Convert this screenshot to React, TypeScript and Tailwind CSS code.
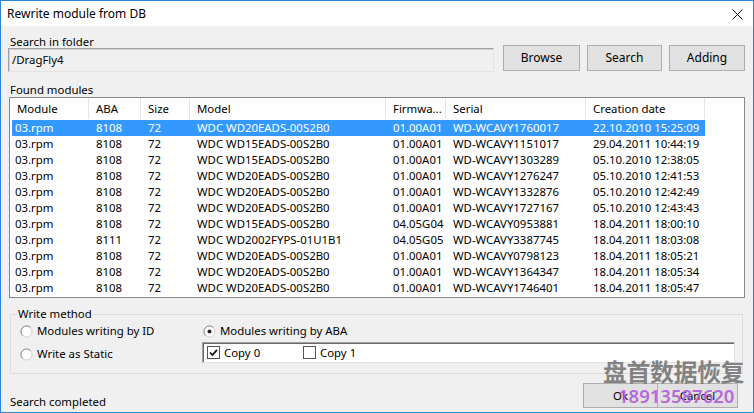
import React from 'react';

type Row = [string, string, string, string, string, string, string];

const rows: Row[] = [
  ['03.rpm', '8108', '72', 'WDC WD20EADS-00S2B0', '01.00A01', 'WD-WCAVY1760017', '22.10.2010 15:25:09'],
  ['03.rpm', '8108', '72', 'WDC WD15EADS-00S2B0', '01.00A01', 'WD-WCAVY1151017', '29.04.2011 10:44:19'],
  ['03.rpm', '8108', '72', 'WDC WD15EADS-00S2B0', '01.00A01', 'WD-WCAVY1303289', '05.10.2010 12:38:05'],
  ['03.rpm', '8108', '72', 'WDC WD20EADS-00S2B0', '01.00A01', 'WD-WCAVY1276247', '05.10.2010 12:41:53'],
  ['03.rpm', '8108', '72', 'WDC WD20EADS-00S2B0', '01.00A01', 'WD-WCAVY1332876', '05.10.2010 12:42:49'],
  ['03.rpm', '8108', '72', 'WDC WD20EADS-00S2B0', '01.00A01', 'WD-WCAVY1727167', '05.10.2010 12:43:43'],
  ['03.rpm', '8108', '72', 'WDC WD15EADS-00S2B0', '04.05G04', 'WD-WCAVY0953881', '18.04.2011 18:00:10'],
  ['03.rpm', '8111', '72', 'WDC WD2002FYPS-01U1B1', '04.05G05', 'WD-WCAVY3387745', '18.04.2011 18:03:08'],
  ['03.rpm', '8108', '72', 'WDC WD20EADS-00S2B0', '01.00A01', 'WD-WCAVY0798123', '18.04.2011 18:05:21'],
  ['03.rpm', '8108', '72', 'WDC WD20EADS-00S2B0', '01.00A01', 'WD-WCAVY1364347', '18.04.2011 18:05:34'],
  ['03.rpm', '8108', '72', 'WDC WD20EADS-00S2B0', '01.00A01', 'WD-WCAVY1746401', '18.04.2011 18:05:47'],
];

const columns = ['Module', 'ABA', 'Size', 'Model', 'Firmwa...', 'Serial', 'Creation date'];

// column widths, px — header and rows share the same template
const gridCols = 'grid grid-cols-[79px_52px_49px_196px_60px_140px_119px_1fr]';

function WinButton({ children, className = '' }: { children: React.ReactNode; className?: string }) {
  return (
    <button
      type="button"
      className={`flex items-center justify-center border border-[#adadad] bg-[#e1e1e1] leading-none text-black ${className}`}
    >
      {children}
    </button>
  );
}

function Radio({ checked }: { checked?: boolean }) {
  return (
    <svg width="13" height="13" viewBox="0 0 13 13" className="shrink-0">
      <circle cx="6.5" cy="6.5" r="5.5" fill="#fff" stroke="#d0d0d0" />
      <path d="M2.6 10.4 A5.5 5.5 0 0 1 10.4 2.6" fill="none" stroke="#8a8a8a" />
      {checked ? <circle cx="6.5" cy="6.5" r="2" fill="#222" /> : null}
    </svg>
  );
}

function Checkbox({ checked }: { checked?: boolean }) {
  return (
    <svg width="13" height="13" viewBox="0 0 13 13" className="shrink-0">
      <rect x="0.5" y="0.5" width="12" height="12" fill="#fff" stroke="#555" />
      {checked ? <path d="M3 6.5 L5.4 9 L10 3.8" fill="none" stroke="#111" strokeWidth="1.8" /> : null}
    </svg>
  );
}

export default function App() {
  return (
    <div
      className="relative flex h-[413px] w-[754px] flex-col overflow-hidden border border-[#2b86d3] bg-[#f0f0f0] text-[11.4px] text-black"
      style={{ fontFamily: '"Noto Sans", "Open Sans", sans-serif' }}
    >
      {/* title bar */}
      <div className="flex h-[25px] shrink-0 items-center justify-between bg-white pl-[6px] pr-[10px] text-[12px]">
        <span className="leading-none">Rewrite module from DB</span>
        <svg width="11" height="11" viewBox="0 0 11 11" className="mt-[1px]">
          <path d="M0.5 0.5 L10.5 10.5 M10.5 0.5 L0.5 10.5" stroke="#111" strokeWidth="1" />
        </svg>
      </div>

      <div className="flex flex-1 flex-col pl-[7px] pr-[8px] pt-[10px]">
        {/* folder row */}
        <div className="flex">
          <div className="flex w-[486px] flex-col">
            <span className="pl-[2px] leading-[12px]">Search in folder</span>
            <div className="flex h-[24px] items-center border border-b-[#e3e3e3] border-l-[#a0a0a0] border-r-[#e3e3e3] border-t-[#a0a0a0] bg-[#f0f0f0] pl-[3px] shadow-[inset_1px_1px_0_#d4d4d4]">
              /DragFly4
            </div>
          </div>
          <div className="ml-[9px] mt-[9px] flex h-[26px] gap-[7px] text-[12px]">
            <WinButton className="w-[77px]">Browse</WinButton>
            <WinButton className="w-[75px]">Search</WinButton>
            <WinButton className="w-[76px]">Adding</WinButton>
          </div>
        </div>

        <span className="mt-[11px] pl-[2px] leading-[13px]">Found modules</span>

        {/* list view */}
        <div className="ml-[1px] mt-[1px] flex h-[201px] w-[736px] flex-col border border-[#828790] bg-white">
          <div className={`${gridCols} h-[21px] shrink-0`}>
            {columns.map((c, i) => (
              <div
                key={c}
                className={`flex items-center border-r border-[#e5e5e5] ${i === 0 ? 'pl-[7px]' : 'pl-[7px]'}`}
              >
                {c}
              </div>
            ))}
            <div />
          </div>
          <div className="mt-[1px] flex flex-col">
            {rows.map((r, idx) => {
              const selected = idx === 0;
              return (
                <div key={idx} className={`${gridCols} h-[16px] leading-[16px]`}>
                  {r.map((cell, i) => (
                    <div
                      key={i}
                      className={`whitespace-nowrap ${i === 0 ? 'ml-[2px] pl-[3px]' : 'pl-[7px]'} ${
                        selected ? 'bg-[#3399ff] text-white' : ''
                      }`}
                    >
                      {cell}
                    </div>
                  ))}
                  <div />
                </div>
              );
            })}
          </div>
        </div>

        {/* write method group */}
        <fieldset className="ml-[2px] mt-[9px] w-[733px] border border-[#dcdcdc] pb-[10px] pr-[7px]">
          <legend className="ml-[6px] px-[1px] leading-[14px]">Write method</legend>
          <div className="mt-[2px] flex">
            <div className="flex w-[191px] flex-col pl-[9px]">
              <div className="flex h-[16px] items-center gap-[4px]">
                <Radio />
                <span>Modules writing by ID</span>
              </div>
              <div className="mt-[7px] flex h-[16px] items-center gap-[4px]">
                <Radio />
                <span>Write as Static</span>
              </div>
            </div>
            <div className="flex flex-1 flex-col">
              <div className="flex h-[16px] items-center gap-[4px] pl-[1px]">
                <Radio checked />
                <span>Modules writing by ABA</span>
              </div>
              <div className="mt-[3px] flex h-[21px] items-center border border-b-[#e3e3e3] border-l-[#a0a0a0] border-r-[#e3e3e3] border-t-[#a0a0a0] bg-white pl-[4px] shadow-[inset_1px_1px_0_#696969]">
                <div className="flex w-[96px] items-center gap-[4px]">
                  <Checkbox checked />
                  <span>Copy 0</span>
                </div>
                <div className="flex items-center gap-[4px]">
                  <Checkbox />
                  <span>Copy 1</span>
                </div>
              </div>
            </div>
          </div>
        </fieldset>

        {/* status + dialog buttons */}
        <div className="mt-[9px] flex items-end justify-between">
          <span className="mb-[-2px] pl-[2px] leading-[16px]">Search completed</span>
          <div className="mr-[7px] flex h-[25px]">
            <WinButton className="w-[75px]">Ok</WinButton>
            <WinButton className="-ml-px w-[81px]">Cancel</WinButton>
          </div>
        </div>
      </div>

      {/* watermark lying over the dialog buttons */}
      <div className="pointer-events-none absolute left-[602px] top-[356px] flex flex-col items-start">
        <span
          className="text-[24px] font-bold leading-[28px] tracking-[-0.5px] text-[#6e6e6e]/85"
          style={{ fontFamily: '"Noto Sans CJK SC", sans-serif' }}
        >
          盘首数据恢复
        </span>
        <span className="ml-[15px] text-[18.5px] font-semibold leading-[22px] text-[#b05ad8]/90">18913587620</span>
      </div>
    </div>
  );
}
